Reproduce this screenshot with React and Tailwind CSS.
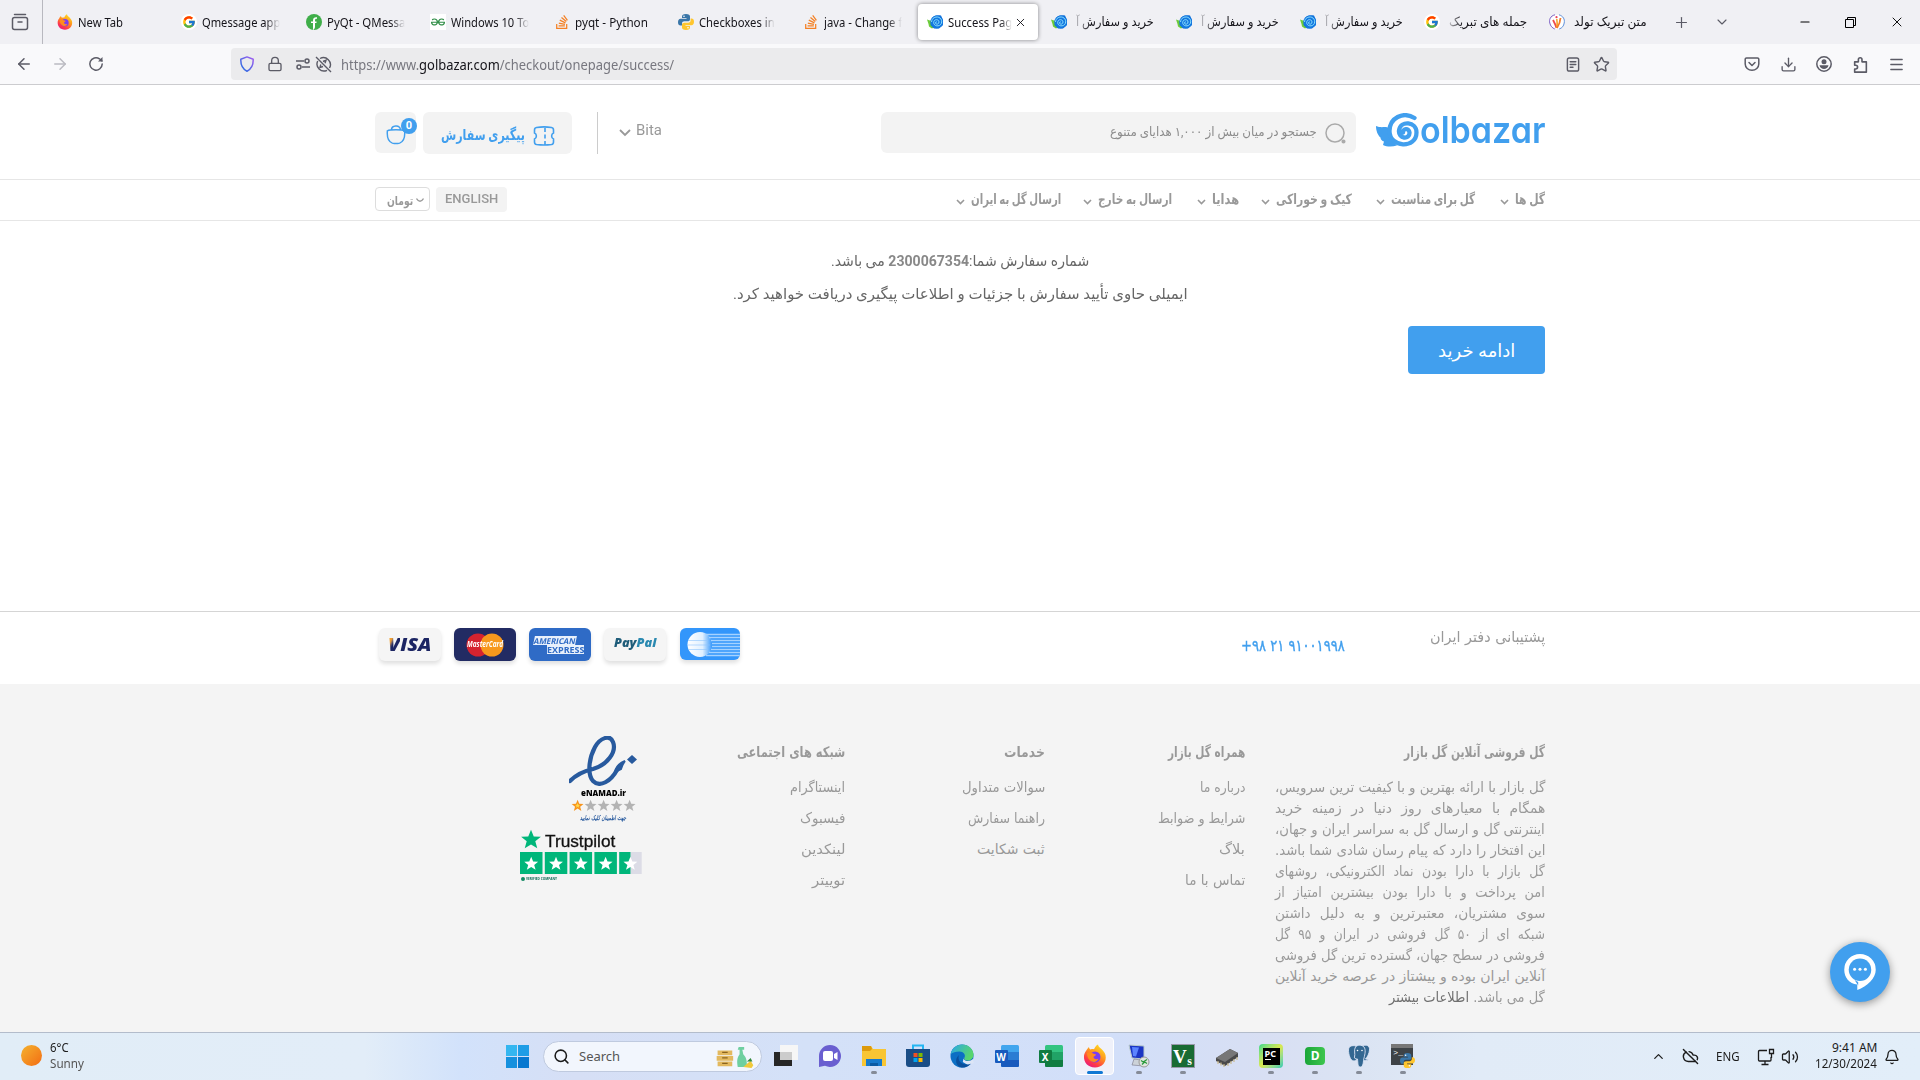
import React, { useLayoutEffect, useRef } from "react";
import { ArrowLeft, ArrowRight, Lock, Star, Plus, ChevronDown, ChevronUp, Minus, X, Menu, Download, Search, Bell, Volume2, CloudOff } from "lucide-react";
import { FcGoogle } from "react-icons/fc";
import { FaStackOverflow } from "react-icons/fa6";
import { SiGeeksforgeeks } from "react-icons/si";

/* One line of text, condensed or widened to fill the width of its box. */
function Fit({ children, className = "", rtl = false }) {
  const outer = useRef(null);
  const inner = useRef(null);
  useLayoutEffect(() => {
    const apply = () => {
      if (!inner.current) return;
      const n = inner.current.offsetWidth;
      if (n) inner.current.style.transform = `scaleX(${outer.current.clientWidth / n})`;
    };
    apply();
    document.fonts?.ready.then(apply);
  }, []);
  return (
    <div ref={outer} dir="ltr" className={`flex shrink-0 items-center ${className}`}>
      <span ref={inner} dir={rtl ? "rtl" : "ltr"} className="shrink-0 origin-left whitespace-nowrap">{children}</span>
    </div>
  );
}

const Firefox = ({ className }) => (
  <svg viewBox="0 0 24 24" className={className}>
    <defs>
      <linearGradient id="ffg" x1="0.8" y1="0" x2="0.2" y2="1">
        <stop offset="0" stopColor="#ffe226" /><stop offset="0.4" stopColor="#ff9a1c" /><stop offset="0.75" stopColor="#ff3b47" /><stop offset="1" stopColor="#e31587" />
      </linearGradient>
    </defs>
    <path d="M3 7c1-2 2-3 3-4 0 1 .5 2 1.500 2.500C9 5 10 5 11 5.200 12 3 13 1.500 15 .5c0 3 6 5 7.500 10.500C24 18 19 23.500 12 23.500S.5 18.500 1 12c.2-2 1-4 2-5z" fill="url(#ffg)" />
    <circle cx="12" cy="13" r="5.500" fill="#7b3df0" />
    <path d="M4 9c3-2 5-1 6 .5 1 .5 2.500.5 3 1-.5 1.500-2 1.500-2.500 2.500 0 2 3 3 5 1.500-1 3-4 4-6.500 3C6 16.500 4 13 4 9z" fill="#ff8b1e" />
  </svg>
);
const FormDocs = () => (
  <svg viewBox="0 0 16 16" className="size-4"><ellipse cx="8" cy="8" rx="8" ry="8" fill="#3fae49" /><path d="M7 16V6.500C7 4 8.500 3 11 3.300v1.600C9.500 4.700 9 5.300 9 6.500v6.500c0 1-1 2.500-2 3zM5 7.500h5.500V9H5z" fill="#fff" /></svg>
);
const Python = ({ className }) => (
  <svg viewBox="0 0 16 16" className={className}>
    <path d="M8 0C5 0 4 1 4 2.500V4h4.500v.8H2.500C1 4.800 0 6 0 8.200S1 11.500 2.500 11.500H4V9.500C4 8.200 5 7.300 6.300 7.300h3.500C11 7.300 12 6.500 12 5.200V2.500C12 1 10.800 0 8 0z" fill="#3a76a8" /><circle cx="6" cy="2.300" r=".8" fill="#fff" />
    <path d="M8 16c3 0 4-1 4-2.500V12H7.500v-.8h6c1.500 0 2.500-1.200 2.500-3.400S15 4.500 13.500 4.500H12.600v2c0 1.300-1 2.200-2.300 2.200H6.500C5 8.700 4 9.500 4 10.800v2.700C4 15 5.200 16 8 16z" fill="#ffc62e" /><circle cx="10" cy="13.700" r=".8" fill="#fff" />
  </svg>
);
const Rose = () => (
  <svg viewBox="0 0 16 16" className="size-4" fill="none">
    <path d="M0 5.500l4.500 1.500 3 6-2.500 1.500L2 12.500 1.500 10z" fill="#6ccb3b" />
    <path d="M4 6C5 2 9 .5 14 1.500L16 6v5l-4 3.500H7L3.500 11z" fill="#0f6fd8" />
    <circle cx="9.800" cy="8" r="6.400" fill="#1478e0" />
    <path d="M10 8.300c-.6-.9-1.900-.2-1.500.9.500 1.600 3.500 1.200 3.500-1.200 0-3-5-3.200-5.300.3-.3 4 5.800 5 7.600 1.200C16 5 11.500 1.500 7.300 3.600 5.500 4.500 4.700 6 4.500 8" stroke="#9cecff" strokeWidth=".85" />
  </svg>
);
const Feather = () => (
  <svg viewBox="0 0 16 16" className="size-4" fill="none" strokeWidth="1">
    <circle cx="8" cy="8" r="7.300" fill="#fff" />
    <path d="M6 .8C1 2 0 6 0.800 9c.6 3 2.500 5 5 6" stroke="#7c5fc4" /><path d="M10 .8c4 1.200 6 4.200 5.200 8.200-.5 3-2 5-5 6" stroke="#5f8fd8" />
    <path d="M4 6c1 2 2.500 4 3.500 8" stroke="#ef4b4b" strokeWidth="1.800" /><path d="M7.800 5c.5 3 .5 6 0 9" stroke="#f5a21d" strokeWidth="1.500" /><path d="M11.500 4c-.3 4-1.500 7-3.500 10" stroke="#f47c2a" strokeWidth="1.800" /><circle cx="7.500" cy="3.200" r="1.100" fill="#e9445a" />
  </svg>
);
const Google = () => <span className="flex size-4 items-center justify-center rounded-full bg-white"><FcGoogle className="size-3.5" /></span>;
const Geeks = () => <span className="flex size-4 items-center justify-center bg-white"><SiGeeksforgeeks className="size-3.5 text-[#2f8d46]" /></span>;
const Stack = () => (
  <span className="relative flex size-4 items-center justify-center"><FaStackOverflow className="size-4 text-[#f48024]" /></span>
);

const tabs = [
  { icon: <Firefox className="size-4" />, text: "New Tab", w: "w-[45px]" },
  { icon: <Google />, text: "Qmessage app", w: "w-[78px]", fade: true },
  { icon: <FormDocs />, text: "PyQt - QMessa", w: "w-[78px]", fade: true },
  { icon: <Geeks />, text: "Windows 10 To", w: "w-[78px]", fade: true },
  { icon: <Stack />, text: "pyqt - Python", w: "w-[73px]" },
  { icon: <Python className="size-4" />, text: "Checkboxes in", w: "w-[76px]", fade: true },
  { icon: <Stack />, text: "java - Change f", w: "w-[78px]", fade: true },
  { icon: <Rose />, text: "Success Pag", w: "w-[64px]", fade: true, active: true },
  { icon: <Rose />, text: "خرید و سفارش آ", w: "w-[78px]", rtl: true },
  { icon: <Rose />, text: "خرید و سفارش آ", w: "w-[78px]", rtl: true },
  { icon: <Rose />, text: "خرید و سفارش آ", w: "w-[78px]", rtl: true },
  { icon: <Google />, text: "جمله های تبریک", w: "w-[78px]", rtl: true },
  { icon: <Feather />, text: "متن تبریک تولد", w: "w-[73px]", rtl: true, plain: true },
];

function TabBar() {
  return (
    <div className="flex h-11 bg-[#f0f0f4] text-[#15141a]">
      <div className="flex w-[43px] shrink-0 items-center justify-center border-r border-[#b8b8bf]">
        <svg viewBox="0 0 18 18" className="mr-0.5 size-[18px]" fill="none" stroke="#5b5b66" strokeWidth="1.500" strokeLinecap="round"><path d="M3.500 1.500h11" /><rect x="1.500" y="4.500" width="15" height="12" rx="2" /><path d="M7 9h4" /></svg>
      </div>
      <div className="ml-[5px] flex items-center">
        {tabs.map((t, i) => (
          <div key={i} className="flex w-[124.3px] shrink-0">
            <div className={`flex h-9 w-[120px] items-center rounded pl-[9px] text-[12px] ${t.active ? "bg-white shadow-[0_0_4px_rgba(0,0,0,0.45)]" : ""}`}>
              {t.icon}
              <Fit rtl={t.rtl} className={`mt-px h-5 ${t.w} ${t.rtl ? "ml-[9px] text-[12.5px]" : "ml-[5px]"} ${t.fade ? "[mask-image:linear-gradient(to_right,#000_82%,transparent)]" : ""} ${t.rtl && !t.plain ? "[mask-image:linear-gradient(to_left,#000_82%,rgba(0,0,0,0.25))]" : ""}`}>{t.text}</Fit>
              {t.active && <X className="ml-0.5 size-[13px]" strokeWidth={1.7} />}
            </div>
          </div>
        ))}
      </div>
      <Plus className="mt-3.5 ml-[9px] size-[17px] shrink-0 text-[#5b5b66]" strokeWidth={1.7} />
      <ChevronDown className="mt-3.5 ml-6 size-4 shrink-0 text-[#5b5b66]" strokeWidth={1.7} />
      <div className="mr-[15px] ml-auto flex items-center gap-[33px] text-black">
        <Minus className="size-3.5" strokeWidth={1.8} />
        <svg viewBox="0 0 11 11" className="size-[11px]" fill="none" stroke="#000"><path d="M.5 2.500h8v8h-8zM2.500 2.500v-2h8v8h-2" /></svg>
        <X className="size-4" strokeWidth={1.4} />
      </div>
    </div>
  );
}

function Toolbar() {
  return (
    <div className="flex h-[41px] items-center border-b border-[#cccccf] bg-[#f9f9fb] text-[#5b5b66]">
      <ArrowLeft className="ml-[15px] size-[18px]" strokeWidth={2} />
      <ArrowRight className="ml-[18px] size-[18px] text-[#bbbbc2]" strokeWidth={2} />
      <svg viewBox="0 0 16 16" className="ml-[19px] size-4" fill="none" stroke="currentColor" strokeWidth="1.500" strokeLinecap="round"><path d="M14.200 8A6.200 6.200 0 1 1 11.500 2.800L14 5" /><path d="M14.500 1v4.500H10z" fill="currentColor" stroke="none" /></svg>
      <div className="ml-[127px] flex h-8 w-[1386px] items-center rounded bg-[#ebebed]">
        <svg viewBox="0 0 16 16" className="ml-2 size-4" fill="none" strokeWidth="1.500">
          <defs><linearGradient id="sh" x1="0" y1="1" x2="1" y2="0"><stop offset="0" stopColor="#1f6fe0" /><stop offset="1" stopColor="#a35cf0" /></linearGradient></defs>
          <path d="M8 .9L14.200 3.200C14.400 8.500 12 13.300 8 15.200 4 13.300 1.600 8.500 1.800 3.200z" stroke="url(#sh)" strokeLinejoin="round" />
        </svg>
        <Lock className="ml-3 size-4" strokeWidth={2} />
        <svg viewBox="0 0 16 12" className="ml-[12px] h-3 w-4" fill="none" stroke="currentColor" strokeWidth="1.500"><path d="M1 3h8M7 9h8" /><circle cx="12" cy="3" r="2" /><circle cx="4" cy="9" r="2" /></svg>
        <svg viewBox="0 0 17 17" className="ml-1 size-[17px]" fill="none" stroke="currentColor" strokeWidth="1.400"><path d="M5 2.500a7 7 0 0 1 9.500 9.500M12 14.300A7 7 0 0 1 2.700 5M1 1l15 15" /><path d="M8 5.500l3-1.200-1 3M5.800 8.500L5 11.500l3-1" /></svg>
        <Fit className="ml-[9px] h-6 w-[333px] text-[14px] text-[#77777f]">https://www.<span className="text-[#15141a]">golbazar.com</span>/checkout/onepage/success/</Fit>
        <svg viewBox="0 0 14 16" className="ml-auto h-[15px] w-[14px]" fill="none" stroke="currentColor" strokeWidth="1.500" strokeLinecap="round"><rect x="1" y="1" width="12" height="14" rx="2" /><path d="M4 5h6M4 8h6M4 11h3" /></svg>
        <Star className="mr-[7px] ml-[13px] size-[17px]" strokeWidth={2} />
      </div>
      <div className="mr-[15px] ml-auto flex items-center gap-[19.500px]">
        <svg viewBox="0 0 16 16" className="size-4" fill="none" stroke="currentColor" strokeWidth="1.500" strokeLinecap="round" strokeLinejoin="round"><path d="M2.500 2h11a1.300 1.300 0 0 1 1.300 1.300V8A6.800 6.300 0 0 1 1.200 8V3.300A1.300 1.300 0 0 1 2.500 2zM5 6.500l3 3 3-3" /></svg>
        <Download className="size-[17px]" strokeWidth={1.900} />
        <svg viewBox="0 0 16 16" className="size-4"><circle cx="8" cy="8" r="7.200" fill="none" stroke="currentColor" strokeWidth="1.500" /><circle cx="8" cy="5.800" r="2.500" fill="currentColor" /><path d="M3.500 9.300h9C12 12 10 13 8 13s-4-1-4.500-3.700z" fill="currentColor" /></svg>
        <svg viewBox="0 0 16 16" className="size-[17px]" fill="none" stroke="currentColor" strokeWidth="1.500" strokeLinejoin="round"><path d="M2.500 5.500H6V3.300a1.700 1.700 0 0 1 3.400 0v2.200h4.100v9.700H2.500v-3h1a1.700 1.700 0 0 0 0-3.500h-1z" /></svg>
        <Menu className="size-[17px]" strokeWidth={1.900} />
      </div>
    </div>
  );
}

function Logo() {
  return (
    <div className="flex h-[36px] w-[169px] items-center text-[#419fee]" dir="ltr">
      <svg viewBox="0 0 44 36" className="mt-0.5 h-9 w-11 shrink-0" fill="none">
        <path d="M0 13c4 2 8 .5 12 1.500l3 12 6 6c-5 1.500-10 1.500-14-.5l1-3.500c-2-.5-3.500-2-3.500-4C2 22.500 0 18 0 13z" fill="currentColor" />
        <path d="M38.500 5C27-2 13.500 5 13.500 18c0 17 27 18 27 1.500 0-11-16-12.500-17.500-2C22 26 34 27 33.500 19.500c-.5-5-7-4-6.500 0" stroke="currentColor" strokeWidth="4.300" strokeLinecap="round" />
      </svg>
      <Fit className="h-9 w-[125px] font-['Inter'] text-[37px] leading-9 font-semibold [font-feature-settings:'cv11']">olbazar</Fit>
    </div>
  );
}

const nav = [
  { t: "گل ها", w: "w-[30px]", m: "" },
  { t: "گل برای مناسبت", w: "w-[84px]", m: "mr-[24px]" },
  { t: "کیک و خوراکی", w: "w-[76px]", m: "mr-[23px]" },
  { t: "هدایا", w: "w-[27px]", m: "mr-[21px]" },
  { t: "ارسال به خارج", w: "w-[74px]", m: "mr-[24px]" },
  { t: "ارسال گل به ایران", w: "w-[90px]", m: "mr-[21px]" },
];

function SiteHeader() {
  return (
    <header className="font-['Roboto','DejaVu_Sans',sans-serif] text-[#999]">
      <div className="mx-auto flex h-[94px] w-[1170px] items-start pt-[27px]">
        <div className="relative flex h-[41px] w-[41px] items-center justify-center rounded-md bg-[#f3f3f3]">
          <svg viewBox="0 0 22 24" className="mt-0.5 h-[22px] w-5" fill="none" stroke="#419fee" strokeWidth="1.600"><path d="M1.500 8.500c3-1.500 16-1.500 19 0 .5 6-1 12-5.500 13.500-2.500.7-5.500.7-8 0C2.500 20.500 1 14.500 1.500 8.500zM6 7.500c0-5 9-6.500 10 0" /></svg>
          <span className="absolute top-[6px] -right-px flex size-4 items-center justify-center rounded-full bg-[#419fee] text-[11px] font-bold text-white">0</span>
        </div>
        <div className="ml-[7px] flex h-[42px] w-[149px] items-center rounded-md bg-[#f3f3f3] pl-[18px]">
          <Fit rtl className="mt-1 h-6 w-[84px] text-[15px] font-bold text-[#419fee]">پیگیری سفارش</Fit>
          <svg viewBox="0 0 22 20" className="mt-1.5 ml-2 h-5 w-[22px]" fill="none" stroke="#419fee" strokeWidth="1.600"><path d="M3.500 1.500C8 .8 14 .8 18.500 1.500c1.500.3 2 1 2 2.500v3c-2.500 1-2.500 5 0 6v3c0 1.500-.5 2.200-2 2.500-4.500.6-10.500.6-15 0C2 18.200 1.500 17.500 1.500 16v-3c2.500-1 2.500-5 0-6V4c0-1.500.5-2.200 2-2.500z" /><path d="M12 2v17" strokeDasharray="4 2.500" /></svg>
        </div>
        <div className="ml-[25px] h-[42px] w-px bg-[#ccc]" />
        <svg viewBox="0 0 12 8" className="mt-[17px] ml-[21px] h-2 w-3" fill="none" stroke="currentColor" strokeWidth="1.800"><path d="M1 1l5 5 5-5" /></svg>
        <Fit className="mt-[7px] ml-[5px] h-6 w-[26px] text-[15.5px]">Bita</Fit>
        <div className="ml-[219px] flex h-[41px] w-[475px] items-center justify-end rounded-md bg-[#f3f3f3] pr-[9px]">
          <Fit rtl className="h-6 w-[207px] text-[12.500px] text-[#8c8c8c]">جستجو در میان بیش از ۱,۰۰۰ هدایای متنوع</Fit>
          <svg viewBox="0 0 22 22" className="ml-2 size-[22px]" fill="none" stroke="#aaa" strokeWidth="1.500"><circle cx="10" cy="11" r="9" /><circle cx="18.500" cy="19.500" r="1.300" fill="#aaa" /></svg>
        </div>
        <div className="ml-5"><Logo /></div>
      </div>
      <div className="border-y border-[#e6e6e6]">
        <div className="mx-auto flex h-10 w-[1170px] items-center">
          <div className="-mt-0.5 flex h-6 w-[55px] items-center rounded border border-[#ddd] pl-[11px]">
            <Fit rtl className="mt-1 h-5 w-[26px] text-[12px] font-bold">تومان</Fit>
            <svg viewBox="0 0 8 5" className="mt-0.5 ml-[3px] h-[5px] w-2" fill="none" stroke="currentColor" strokeWidth="1.300"><path d="M.5.5Q4 6 7.500.5" /></svg>
          </div>
          <div className="-mt-px ml-1.5 flex h-[25px] w-[71px] items-center justify-center rounded bg-[#f3f3f3]">
            <Fit className="-mt-0.5 h-5 w-[53px] text-[13.500px] font-medium">ENGLISH</Fit>
          </div>
          <nav dir="rtl" className="mr-0 ml-auto flex items-center">
            {nav.map((n) => (
              <div key={n.t} className={`flex items-center ${n.m}`}>
                <Fit rtl className={`-mt-px h-6 text-[14px] font-bold ${n.w}`}>{n.t}</Fit>
                <svg viewBox="0 0 9 6" className="mt-1 mr-[6px] ml-px h-1.5 w-[9px]" fill="none" stroke="currentColor" strokeWidth="1.600"><path d="M1 1l3.500 3.500L8 1" /></svg>
              </div>
            ))}
          </nav>
        </div>
      </div>
    </header>
  );
}

function Main() {
  return (
    <main className="mx-auto flex h-[390px] w-[1170px] flex-col items-center pt-[28px] font-['Roboto','DejaVu_Sans',sans-serif] text-[15px] text-[#666]">
      <Fit rtl className="h-6 w-[258px]">شماره سفارش شما:<b className="text-[15px] text-[#888]">2300067354</b> می باشد.</Fit>
      <Fit rtl className="mt-[9px] h-6 w-[455px]">ایمیلی حاوی تأیید سفارش با جزئیات و اطلاعات پیگیری دریافت خواهید کرد.</Fit>
      <button className="mt-[20px] flex h-12 w-[137px] items-center justify-center self-end rounded bg-[#419fee] text-[18px] text-white">
        <Fit rtl className="h-8 w-[77px]">ادامه خرید</Fit>
      </button>
    </main>
  );
}

const card = "flex h-[33px] w-[62px] items-center justify-center rounded-md shadow-[0_3px_4px_rgba(0,0,0,0.12)]";
function Payments() {
  return (
    <div className="flex gap-[13px]" dir="ltr">
      <div className={`${card} bg-[#f5f5f5]`}><Fit className="h-5 w-[44px] font-['Open_Sans'] text-[18px] font-extrabold text-[#1c2563] italic"><span className="bg-linear-to-br from-[#f0a030] from-30% to-[#1c2563] to-45% bg-clip-text text-transparent">V</span>ISA</Fit></div>
      <div className={`${card} relative bg-[#222b63]`}>
        <svg viewBox="0 0 38 24" className="h-6 w-[38px]"><circle cx="12" cy="12" r="11.500" fill="#d5232f" /><circle cx="26" cy="12" r="11.500" fill="#f7981d" /></svg>
        <div className="absolute inset-0 flex items-center justify-center"><Fit className="h-4 w-[36px] font-['Open_Sans'] text-[8.500px] font-bold text-white italic">MasterCard</Fit></div>
      </div>
      <div className={`${card} flex-col bg-[#2f6bc6] font-['Open_Sans'] text-[8px] leading-[9px] font-bold text-[#2f6bc6]`}>
        <Fit className="mr-2.5 h-[9px] w-[42px] -skew-x-12 bg-[#e8f0fb]">AMERICAN</Fit>
        <Fit className="ml-2.5 h-[9px] w-[37px] bg-[#e8f0fb]">EXPRESS</Fit>
      </div>
      <div className={`${card} bg-[#f5f5f5]`}><Fit className="-mt-1 h-5 w-[42px] font-['Open_Sans'] text-[13px] font-extrabold text-[#1f5d7a] italic">Pay<span className="text-[#2a89b0]">Pal</span></Fit></div>
      <div className="ml-px flex h-8 w-[60px] items-center overflow-hidden rounded-md bg-[#3396fb] shadow-[0_3px_4px_rgba(0,0,0,0.12)]">
        <svg viewBox="0 0 60 33" className="h-[33px] w-[60px]">
          <defs><linearGradient id="ci"><stop offset="0" stopColor="#fff" /><stop offset=".6" stopColor="#e0f0ff" /><stop offset="1" stopColor="#3396fb" /></linearGradient></defs>
          <circle cx="20" cy="16.500" r="12.500" fill="url(#ci)" /><path d="M26 6.500h34M29 9.500h31M31 12.500h29M32 15.500h28M32 18.500h28M31 21.500h29M29 24.500h31M26 27.500h34" stroke="#a5d2ff" strokeWidth="1.300" />
          <path d="M8 12.500h20M8 17h22M8 21.500h20" stroke="#8dc5fd" strokeWidth=".6" />
        </svg>
      </div>
    </div>
  );
}

const STAR = "M10 1l2.500 6.200 6.500.3-5.100 4.100 1.800 6.400L10 14.400 4.300 18l1.800-6.400L1 7.500l6.500-.3z";
function Badges() {
  return (
    <div className="flex w-[124px] flex-col" dir="ltr">
      <div className="ml-[50px] flex w-[68px] flex-col items-center">
        <svg viewBox="0 0 68 50" className="h-[50px] w-[68px]" fill="none" stroke="#285a9e" strokeLinecap="round">
          <path d="M1 45C8 38 15 35 24 33 38 29 48 16 44 6 41-2 31 2 26 11 20 22 18 38 24 45c7 7 18 0 24-11" strokeWidth="4.200" /><path d="M46 36c1-6 5-9 10-11-2 2-3 5-4 8z" strokeWidth="2" fill="#285a9e" /><path d="M63 19l5 4.500-5 4.500-5-4.500z" fill="#285a9e" stroke="none" />
        </svg>
        <Fit className="h-[13px] w-[45px] font-['Open_Sans'] text-[9.500px] leading-[13px] font-extrabold text-black">eNAMAD.ir</Fit>
        <svg viewBox="0 0 65 13" className="h-[13px] w-[65px]">
          {[0, 1, 2, 3, 4].map((i) => <path key={i} d={STAR} fill={i ? "#b3b3b3" : "#f7941d"} transform={`translate(${i * 13} 0) scale(.66)`} />)}
          <path d={STAR} fill="#ffd94a" transform="translate(3.800 3.800) scale(.28)" />
        </svg>
        <Fit rtl className="h-3 w-[46px] font-['DejaVu_Sans'] text-[6.500px] leading-3 font-bold text-[#285a9e] italic">جهت اطمینان کلیک نمایید</Fit>
      </div>
      <div className="mt-1 flex h-[22px] items-center">
        <svg viewBox="0 0 20 19" className="ml-px h-[22px] w-[22px]"><path d={STAR} fill="#00b67a" /></svg>
        <Fit className="mt-1.5 ml-[3px] h-5 w-[70px] font-['Liberation_Sans'] text-[17px] text-[#111] [-webkit-text-stroke:0.3px_#111]">Trustpilot</Fit>
      </div>
      <svg viewBox="0 0 122 22" className="mt-0.5 ml-px h-[22px] w-[122px]">
        {[0, 1, 2, 3, 4].map((i) => (
          <g key={i} transform={`translate(${i * 24.800} 0)`}>
            <rect width="22.500" height="22" fill={i === 4 ? "#dcdce6" : "#00b67a"} />
            {i === 4 && <rect width="11.250" height="22" fill="#00b67a" />}
            <path d={STAR} fill="#fff" transform="translate(3.500 4) scale(.77)" />
          </g>
        ))}
      </svg>
      <div className="mt-[2px] ml-0.5 flex h-[6px] items-center gap-px">
        <span className="size-1 rounded-full bg-[#128a63]" />
        <Fit className="h-[6px] w-[31px] font-['Open_Sans'] text-[4px] leading-none font-bold text-[#0d6b57]">VERIFIED COMPANY</Fit>
      </div>
    </div>
  );
}

const about = [
  "گل بازار با ارائه بهترین و با کیفیت ترین سرویس،",
  "همگام با معیارهای روز دنیا در زمینه خرید",
  "اینترنتی گل و ارسال گل به سراسر ایران و جهان،",
  "این افتخار را دارد که پیام رسان شادی شما باشد.",
  "گل بازار با دارا بودن نماد الکترونیکی، روشهای",
  "امن پرداخت و با دارا بودن بیشترین امتیاز از",
  "سوی مشتریان، معتبرترین و به دلیل داشتن",
  "شبکه ای از ۵۰ گل فروشی در ایران و ۹۵ گل",
  "فروشی در سطح جهان، گسترده ترین گل فروشی",
  "آنلاین ایران بوده و پیشتاز در عرصه خرید آنلاین",
];
const cols = [
  { h: ["همراه گل بازار", "w-[77px]"], m: "mr-[30px]", links: [["درباره ما", "w-[45px]"], ["شرایط و ضوابط", "w-[87px]"], ["بلاگ", "w-[26px]"], ["تماس با ما", "w-[60px]"]] },
  { h: ["خدمات", "w-[41px]"], m: "", links: [["سوالات متداول", "w-[83px]"], ["راهنما سفارش", "w-[77px]"], ["ثبت شکایت", "w-[68px]"]] },
  { h: ["شبکه های اجتماعی", "w-[108px]"], m: "", links: [["اینستاگرام", "w-[55px]"], ["فیسبوک", "w-[45px]"], ["لینکدین", "w-[44px]"], ["توییتر", "w-[33px]"]] },
];

function SiteFooter() {
  return (
    <footer className="font-['DejaVu_Sans',sans-serif] text-[#999]">
      <div className="border-t border-[#d5d5d5]">
        <div className="mx-auto flex h-[72px] w-[1170px] items-start pt-4">
          <div className="pl-1"><Payments /></div>
          <Fit className="mt-[6px] ml-[501px] h-6 w-[104px] text-[16px] text-[#419fee] [-webkit-text-stroke:0.4px_#419fee]">+۹۸ ۲۱ ۹۱۰۰۱۹۹۸</Fit>
          <Fit rtl className="-mt-[3px] ml-auto h-6 w-[115px] text-[15px]">پشتیبانی دفتر ایران</Fit>
        </div>
      </div>
      <div className="h-[348px] bg-[#f4f4f4]">
        <div dir="rtl" className="mx-auto flex w-[1170px] text-[14px]">
          <div className="w-[270px] pt-[57px]">
            <Fit rtl className="h-6 w-[141px] text-[14.500px] font-bold">گل فروشی آنلاین گل بازار</Fit>
            <div className="mt-3 flex flex-col">
              {about.map((l) => <Fit rtl key={l} className={`h-[21px] w-[270px] ${[1, 4, 5, 6, 7].includes(about.indexOf(l)) ? "[word-spacing:5px]" : ""}`}>{l}</Fit>)}
              <Fit rtl className="h-[21px] w-[156px]">گل می باشد. <span className="text-[#707070]">اطلاعات بیشتر</span></Fit>
            </div>
          </div>
          {cols.map((c) => (
            <div key={c.h[0]} className={`w-[200px] pt-[57px] ${c.m}`}>
              <Fit rtl className={`h-6 text-[14.500px] font-bold ${c.h[1]}`}>{c.h[0]}</Fit>
              <div className="mt-[10px] flex flex-col gap-[7px]">
                {c.links.map((l) => <Fit rtl key={l[0]} className={`h-6 ${l[1]}`}>{l[0]}</Fit>)}
              </div>
            </div>
          ))}
          <div className="mr-0.5 pt-[52px]"><Badges /></div>
        </div>
      </div>
    </footer>
  );
}

const Office = ({ letter, a, b, c }) => (
  <div className="relative size-6">
    <svg viewBox="0 0 24 24" className="size-6"><rect x="6" y="1" width="18" height="22" rx="1.500" fill={a} /><path d="M6 8h18v8H6z" fill={b} /><path d="M6 16h18v5.500a1.500 1.500 0 0 1-1.500 1.500H7.500A1.500 1.500 0 0 1 6 21.500z" fill={c} /><rect y="6" width="13" height="13" rx="1" fill={c} /></svg>
    <span className="absolute top-[6px] left-0 flex size-[13px] items-center justify-center text-[10px] leading-none font-bold text-white">{letter}</span>
  </div>
);

const apps = [
  { i: <svg viewBox="0 0 24 24" className="size-6"><rect y="8" width="18" height="14" fill="#262626" /><rect x="6" y="1" width="18" height="15" fill="#f6f6f6" /><path d="M6 8h12v8H6z" fill="#ccc" /></svg> },
  { i: <svg viewBox="0 0 24 24" className="size-6"><path d="M12 1a11 11 0 1 1-5 20.800L1 23V12A11 11 0 0 1 12 1z" fill="#6a5fd0" /><rect x="5" y="7" width="10" height="10" rx="2" fill="#fff" /><path d="M16 10l3.500-2v8L16 14z" fill="#fff" /></svg> },
  { dot: true, i: <svg viewBox="0 0 24 24" className="size-6"><path d="M0 2h9l2 3h13v17H0z" fill="#f8c533" /><path d="M0 2h9l1 3-2 2H0z" fill="#dd9a0c" /><path d="M4 15h16v7H4z" fill="#1679cc" /><path d="M8 19h8v3H8z" fill="#0b5aa3" /></svg> },
  { i: <svg viewBox="0 0 24 24" className="size-6"><path d="M7 6V1.500h10V6" fill="none" stroke="#25b6f2" strokeWidth="2" /><path d="M0 5h24v15a3 3 0 0 1-3 3H3a3 3 0 0 1-3-3z" fill="#1a4d86" /><path d="M7.500 9h4v4h-4z" fill="#f25022" /><path d="M12.500 9h4v4h-4z" fill="#7fba00" /><path d="M7.500 14h4v4h-4z" fill="#00a4ef" /><path d="M12.500 14h4v4h-4z" fill="#ffb900" /></svg> },
  { i: <svg viewBox="0 0 24 24" className="size-6"><defs><linearGradient id="ed" x1="0" y1="0" x2="1" y2=".4"><stop offset="0" stopColor="#2aa7ea" /><stop offset="1" stopColor="#58d66c" /></linearGradient></defs><circle cx="12" cy="12" r="11.500" fill="#0c6fc4" /><path d="M.8 10C2 4 6.500.5 12 .5c7 0 11.500 5 11.500 10 0 4-3 6-6 6s-4-1.500-3-3c1.500-2.500-1-6-5-6-4 0-7 1-8.700 2.500z" fill="url(#ed)" /><path d="M13.800 13c-1 2 1 4 4 4 2 0 4-.8 5-2l1 4-6 2-5-3z" fill="#dde6f6" /><path d="M9 11c-2 5 2 9.500 8 9.500 2 0 3.500-.5 4.500-1.500-2 3-6 5-10 4.500C6 22.500 4 15 9 11z" fill="#0a4f9c" /></svg> },
  { i: <Office letter="W" a="#41a5ee" b="#2b7cd3" c="#185abd" /> },
  { i: <Office letter="X" a="#33c481" b="#21a366" c="#107c41" /> },
  { on: true, i: <Firefox className="size-6" /> },
  { dot: true, i: <svg viewBox="0 0 24 24" className="size-6"><path d="M2 1l15 1v13L5 14z" fill="#1b35c4" stroke="#bcc" /><path d="M5 3l7 .5-3 9-3-.5z" fill="#5b84ff" /><path d="M7 15l7 1 3 6-12-1z" fill="#ccd2d8" stroke="#778" strokeWidth=".6" /><circle cx="17" cy="18" r="5" fill="#dfe5df" stroke="#999" /><path d="M14 16.500l3 2-2 2M20 15.500l-3 2 3 2" stroke="#2c9b3d" strokeWidth="1.300" fill="none" /></svg> },
  { dot: true, i: <div className="relative flex size-6 items-center justify-center border border-[#99a] bg-[#196b33] font-['Liberation_Serif'] text-[19px] leading-none font-bold text-white"><span className="mr-1.5">V</span><span className="absolute right-0.5 bottom-0 text-[12px]">s</span></div> },
  { i: <svg viewBox="0 0 24 24" className="size-6"><path d="M1 14L15 5l8 4v4L10 22l-9-5z" fill="#4a4a4a" /><path d="M1 14L15 5l8 4-13 9z" fill="#777" /><path d="M3 17v3M6 18.500v3M9 20v3M13 19v3M16 17v3M19 15v3M22 13v3" stroke="#c9b98c" strokeWidth="1.200" /></svg> },
  { dot: true, i: <div className="relative flex size-6 items-center justify-center rounded bg-linear-to-br from-[#21d789] via-[#d9e94e] to-[#13c9b4]"><div className="flex size-[17px] flex-col bg-black pl-0.5 text-[9px] leading-[11px] font-bold text-white">PC<span className="h-px w-1.5 bg-white" /></div></div> },
  { dot: true, i: <div className="flex h-[18px] w-5 items-center justify-center rounded-sm bg-linear-to-r from-[#19a638] to-[#3cc64e] text-[12px] font-bold text-white">D</div> },
  { dot: true, i: <svg viewBox="0 0 24 24" className="size-6" fill="#336791" stroke="#dbe4f5" strokeWidth=".9"><path d="M7 17C3 17 1.500 10 1.500 6 1.500 2 5 1 9 2l1 13c-.5 1-1.500 2-3 2z" /><path d="M15 2c4-2 8-.5 7.500 4-.3 3.500-2 7-4 9l3 .5c-1 1.500-4 1.500-5 .5z" /><path d="M8.500 3C10 .8 15 .5 17 3c2 3 1 7 0 11-.8 3-.5 9-3.500 9S11 19 10.500 15c-2 0-3.500-.5-3-2 1-3-1-7 1-10z" /><circle cx="10.500" cy="6.500" r=".8" fill="#fff" stroke="none" /><circle cx="15" cy="6.500" r=".8" fill="#fff" stroke="none" /></svg> },
  { dot: true, i: <div className="relative size-6"><div className="h-[21px] w-[22px] border-t-4 border-[#777] bg-[#3e4347] pl-0.5 font-['Liberation_Mono'] text-[8px] leading-[9px] text-white">&gt;_</div><div className="absolute right-0 bottom-0"><Python className="size-[15px]" /></div></div> },
];

function Taskbar() {
  return (
    <div className="flex h-12 border-t border-[#b3bccb] bg-[linear-gradient(to_right,#e1edf7_0%,#e2edf8_19%,#d2e2fb_24%,#d6dff5_30%,#d4e1f8_42%,#d2dff9_58%,#d8dff3_66%,#dbe4f3_71%,#e1ebf7_77%,#e2eef9_100%)] text-[12px] text-[#1b1b1b]">
      <div className="flex w-[506px] items-center pl-[21px]">
        <div className="-mt-0.5 size-[21px] rounded-full bg-linear-to-br from-[#f3b22e] to-[#f26a12]" />
        <div className="-mt-px ml-2 flex flex-col">
          <Fit className="h-4 w-[19px]">6°C</Fit>
          <Fit className="h-4 w-[34px] text-[#555]">Sunny</Fit>
        </div>
      </div>
      <div className="mt-3 grid h-[23px] w-[23px] grid-cols-2 gap-px">
        <span className="bg-[#34b6f0]" /><span className="bg-[#1f9de6]" /><span className="bg-[#1590de]" /><span className="bg-[#0878d0]" />
      </div>
      <div className="mt-2 ml-[14px] flex h-[31px] w-[219px] items-center rounded-full border border-[#bfcadf] bg-[#f2f6fd] pl-[9px]">
        <Search className="size-[17px]" strokeWidth={2.200} />
        <Fit className="ml-[9px] h-6 w-[41px] text-[13px] text-[#555]">Search</Fit>
        <svg viewBox="0 0 40 24" className="ml-auto mr-1.5 h-[22px] w-10"><path d="M1 5h16v5H1zM0 11h18v5H0zM1 17h16v5H1z" fill="#e3b95f" /><path d="M6 7h6M6 13h6M6 19h6" stroke="#8a6420" strokeWidth="1.500" /><path d="M24 1h6v3h-2l1 5c4 4 4 8 4 14h-10c-1-6-1-10 2-14V4h-2z" fill="#6fcfa0" /><path d="M29 23l8-7 3 5-2 3z" fill="#f0c93a" /><path d="M33 17l4-4 2 4z" fill="#358a3e" /></svg>
      </div>
      <div className="ml-[2px] flex">
        {apps.map((a, i) => (
          <div key={i} className="flex w-[44.1px] flex-col items-center pt-1">
            <div className={`flex h-[38px] w-[39px] items-center justify-center rounded ${a.on ? "border border-white bg-[#eff1fa]" : ""}`}>
              {a.i}
            </div>
            {a.dot && <span className="-mt-1 h-[3px] w-1.5 rounded-full bg-[#858b97]" />}
            {a.on && <span className="-mt-1 h-[3px] w-4 rounded-full bg-[#0f78d4]" />}
          </div>
        ))}
      </div>
      <div className="mr-[20px] ml-auto flex items-center">
        <ChevronUp className="size-[15px]" strokeWidth={2} />
        <CloudOff className="ml-[16px] size-[17px]" strokeWidth={2} />
        <Fit className="ml-[17px] h-6 w-6">ENG</Fit>
        <svg viewBox="0 0 18 18" className="ml-[17px] size-[18px]" fill="none" stroke="#1b1b1b" strokeWidth="1.300"><path d="M10 2.500H2.500a1 1 0 0 0-1 1V12a1 1 0 0 0 1 1H13a1 1 0 0 0 1-1V9M8 13v3.500M4.500 16.500h7M12.500 1.500h4v4h-4zM14.500 5.500V10" /></svg>
        <Volume2 className="ml-[6px] size-[18px]" strokeWidth={1.700} />
        <div className="-mt-px ml-[16px] flex flex-col items-end">
          <Fit className="h-4 w-[45px]">9:41 AM</Fit>
          <Fit className="h-4 w-[62px]">12/30/2024</Fit>
        </div>
        <Bell className="ml-[7px] size-4" strokeWidth={1.900} />
      </div>
    </div>
  );
}

export default function App() {
  return (
    <div className="relative h-[1080px] w-[1920px] overflow-hidden bg-white font-['Noto_Sans','DejaVu_Sans',sans-serif]">
      <TabBar />
      <Toolbar />
      <SiteHeader />
      <Main />
      <SiteFooter />
      <Taskbar />
      <div className="absolute right-[30px] bottom-[78px] flex size-[60px] items-center justify-center rounded-full bg-[#419fee] shadow-[0_2px_8px_rgba(0,0,0,0.4)]">
        <svg viewBox="0 0 40 42" className="h-[42px] w-9"><path d="M17 41v-6C8 34 2.500 27 2.500 18.500a17.500 17.500 0 0 1 35 0C37.500 28 28 37 17 41z" fill="#fff" /><circle cx="20" cy="18.500" r="12.500" fill="#419fee" /><path d="M14 30l4 2v4z" fill="#419fee" /><g fill="#fff"><circle cx="14" cy="18" r="1.700" /><circle cx="20" cy="18" r="1.700" /><circle cx="26" cy="18" r="1.700" /></g></svg>
      </div>
    </div>
  );
}
